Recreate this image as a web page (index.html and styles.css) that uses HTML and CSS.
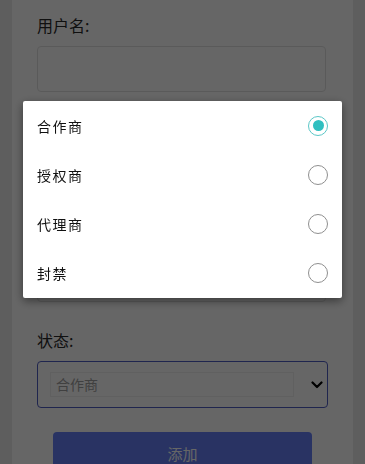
FILE: index.html
```html
<!DOCTYPE html>
<html lang="zh-CN">
<head>
<meta charset="utf-8">
<title>添加用户</title>
<link rel="stylesheet" href="styles.css">
</head>
<body>
<main class="card">
  <form class="form">
    <div class="field">
      <label class="label">用户名:</label>
      <input class="input" type="text">
    </div>
    <div class="field field-plain">
      <input class="input" type="password" aria-label="密码">
    </div>
    <div class="field field-plain">
      <input class="input" type="text" aria-label="类型">
    </div>
    <div class="field">
      <label class="label">状态:</label>
      <div class="select">
        <span class="select-value">合作商</span>
        <svg class="chevron" width="12" height="8" viewBox="0 0 12 8"><path d="M1.5 1.5 L6 6 L10.5 1.5" fill="none" stroke="#000" stroke-width="2.2" stroke-linecap="round" stroke-linejoin="round"/></svg>
      </div>
    </div>
    <button class="btn" type="button">添加</button>
  </form>
</main>
<div class="overlay"></div>
<div class="dialog" role="radiogroup">
  <div class="option"><span class="option-text">合作商</span><span class="radio checked"></span></div>
  <div class="option"><span class="option-text">授权商</span><span class="radio"></span></div>
  <div class="option"><span class="option-text">代理商</span><span class="radio"></span></div>
  <div class="option"><span class="option-text">封禁</span><span class="radio"></span></div>
</div>
</body>
</html>
```
FILE: styles.css
```css
html, body {
  margin: 0;
  padding: 0;
  height: 100%;
  overflow: hidden;
}
body {
  background: #ebebeb;
  font-family: "Noto Sans CJK SC", "Noto Sans", sans-serif;
  color: #333;
}
.card {
  margin: 0 12px;
  background: #fff;
  min-height: 100%;
  padding: 14px 25px 0;
  box-sizing: border-box;
}
.form {
  display: flex;
  flex-direction: column;
  gap: 27px;
}
.field {
  display: flex;
  flex-direction: column;
  gap: 10px;
}
.field-plain {
  padding-top: 32px;
}
.label {
  font-size: 16px;
  line-height: 22px;
  color: #2a2a2a;
}
.input {
  height: 46px;
  box-sizing: border-box;
  border: 1px solid #e2e2e2;
  border-radius: 4px;
  background: #fff;
  margin: 0;
  width: 289px;
}
.select {
  height: 47px;
  box-sizing: border-box;
  border: 1px solid #4e5cc4;
  border-radius: 4px;
  display: flex;
  align-items: center;
  padding: 0 4px 0 12px;
  gap: 17px;
}
.select-value {
  flex: 1;
  height: 25px;
  box-sizing: border-box;
  border: 1px solid #f0f0f0;
  font-size: 14px;
  line-height: 23px;
  padding-left: 5px;
  color: #a0a0a0;
}
.chevron {
  display: block;
}
.btn {
  margin: -3px 16px 0;
  height: 42px;
  border: none;
  border-radius: 4px;
  background: #6680f8;
  color: #fff;
  font-family: inherit;
  font-size: 15px;
  padding: 0;
}
.overlay {
  position: fixed;
  inset: 0;
  background: rgba(0, 0, 0, 0.6);
}
.dialog {
  position: fixed;
  left: 23px;
  top: 101px;
  width: 319px;
  background: #fff;
  border-radius: 2px;
  box-shadow: 0 3px 10px rgba(0, 0, 0, 0.45);
  display: flex;
  flex-direction: column;
  padding-bottom: 1px;
}
.option {
  height: 49px;
  display: flex;
  align-items: center;
  justify-content: space-between;
  padding: 0 14px;
}
.option-text {
  font-size: 14px;
  letter-spacing: 1.5px;
  color: #111;
}
.radio {
  width: 20px;
  height: 20px;
  box-sizing: border-box;
  border: 1px solid #8f8f8f;
  border-radius: 50%;
  display: flex;
  align-items: center;
  justify-content: center;
}
.radio.checked {
  border-color: #5bc7c7;
}
.radio.checked::after {
  content: "";
  width: 11px;
  height: 11px;
  border-radius: 50%;
  background: #2fbfc0;
}
```
